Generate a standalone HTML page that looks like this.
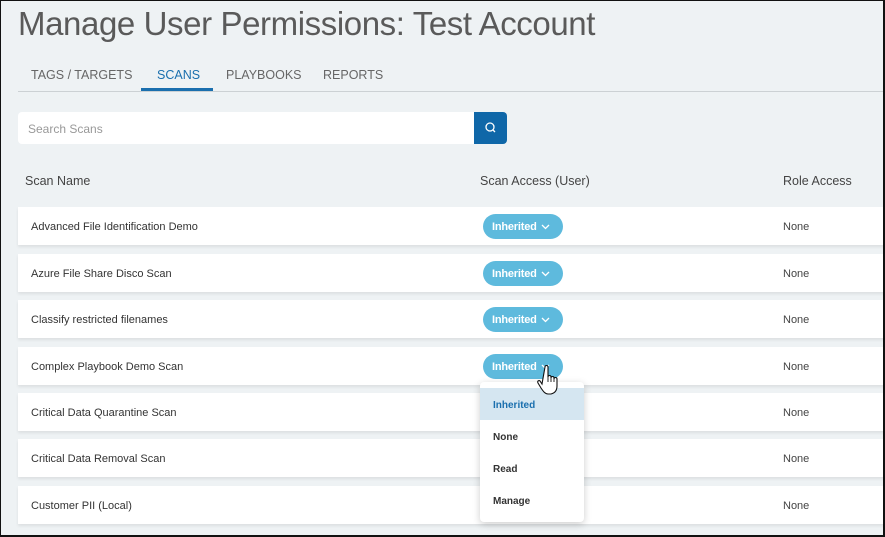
<!DOCTYPE html>
<html><head><style>
*{margin:0;padding:0;box-sizing:border-box}
body{width:885px;height:537px;overflow:hidden;background:#eef2f4;font-family:"Liberation Sans",sans-serif;position:relative}
.a{position:absolute}
h1{position:absolute;left:18px;top:5px;font-weight:300;font-size:33px;color:#5a5a5a;letter-spacing:-0.4px}
.tab{position:absolute;top:68px;font-size:12.5px;color:#666}
.row{position:absolute;left:18px;width:867px;height:38px;background:#fff;box-shadow:0 2px 3px rgba(0,0,0,.08)}
.row .n{position:absolute;left:13px;top:14px;font-size:11px;color:#333}
.row .r{position:absolute;left:765px;top:14px;font-size:11px;color:#444}
.pill{position:absolute;left:465px;top:7px;width:80px;height:25px;border-radius:13px;background:#5ebadd;color:#fff;font-size:11px;font-weight:bold;padding:7px 0 0 9px;letter-spacing:-0.2px}
.pill svg{position:absolute;left:58px;top:10px}
.menu{position:absolute;left:480px;top:382px;width:104px;height:140px;background:#fff;border-radius:4px;box-shadow:0 2px 8px rgba(0,0,0,.2)}
.menu div{height:32px;font-size:10px;font-weight:bold;color:#333;padding:12px 0 0 13px}
.frame{position:absolute;left:0;top:0;width:885px;height:537px;border:1px solid #111;border-width:1px 2px 2px 1px}
</style></head><body>
<h1>Manage User Permissions: Test Account</h1>
<div class="tab" style="left:31px">TAGS / TARGETS</div>
<div class="tab" style="left:157px;color:#1a6fae">SCANS</div>
<div class="tab" style="left:226px">PLAYBOOKS</div>
<div class="tab" style="left:323px">REPORTS</div>
<div class="a" style="left:18px;top:91px;width:867px;height:1px;background:#ccd1d4"></div>
<div class="a" style="left:141px;top:88px;width:72px;height:3px;background:#1a6fae"></div>
<div class="a" style="left:18px;top:112px;width:456px;height:32px;background:#fff;border-radius:4px 0 0 4px"></div>
<div class="a" style="left:28px;top:122px;font-size:12px;color:#999">Search Scans</div>
<div class="a" style="left:474px;top:112px;width:33px;height:32px;background:#0f67a8;border-radius:0 4px 4px 0">
<svg width="33" height="32"><circle cx="16" cy="15" r="4" fill="none" stroke="#fff" stroke-width="1.3"/><line x1="19" y1="18" x2="21" y2="20" stroke="#fff" stroke-width="1.3"/></svg></div>
<div class="a" style="left:25px;top:174px;font-size:12.5px;color:#444">Scan Name</div>
<div class="a" style="left:480px;top:174px;font-size:12.5px;color:#444">Scan Access (User)</div>
<div class="a" style="left:783px;top:174px;font-size:12.5px;color:#444">Role Access</div>

<div class="row" style="top:207px"><span class="n">Advanced File Identification Demo</span><div class="pill">Inherited<svg width="9" height="6"><path d="M1 1L4.5 4.5L8 1" fill="none" stroke="#fff" stroke-width="1.3"/></svg></div><span class="r">None</span></div>
<div class="row" style="top:254px"><span class="n">Azure File Share Disco Scan</span><div class="pill">Inherited<svg width="9" height="6"><path d="M1 1L4.5 4.5L8 1" fill="none" stroke="#fff" stroke-width="1.3"/></svg></div><span class="r">None</span></div>
<div class="row" style="top:300px"><span class="n">Classify restricted filenames</span><div class="pill">Inherited<svg width="9" height="6"><path d="M1 1L4.5 4.5L8 1" fill="none" stroke="#fff" stroke-width="1.3"/></svg></div><span class="r">None</span></div>
<div class="row" style="top:347px"><span class="n">Complex Playbook Demo Scan</span><div class="pill">Inherited<svg width="9" height="6"><path d="M1 1L4.5 4.5L8 1" fill="none" stroke="#fff" stroke-width="1.3"/></svg></div><span class="r">None</span></div>
<div class="row" style="top:393px"><span class="n">Critical Data Quarantine Scan</span><span class="r">None</span></div>
<div class="row" style="top:439px"><span class="n">Critical Data Removal Scan</span><span class="r">None</span></div>
<div class="row" style="top:486px"><span class="n">Customer PII (Local)</span><span class="r">None</span></div>

<div class="menu"><div style="background:#d5e6f1;color:#1a6fae;margin-top:6px">Inherited</div><div>None</div><div>Read</div><div>Manage</div></div>
<svg class="a" style="left:536px;top:364px" width="28" height="34" viewBox="0 0 28 34"><path d="M9 3c0-2 3-2 3 0v10c0-2 3-2 3 0v1c0-2 3-2 3 0v1c0-2 3-2 3 0v7c0 4-2 7-6 8h-3c-3 0-5-3-7-6l-3-5c-1-2 1-3 2-2l2 3z" fill="#fff" stroke="#111" stroke-width="1.1"/><path d="M12 13v5M15 14v4M18 15v3" stroke="#111" stroke-width="0.9"/></svg>
<div class="frame"></div>
</body></html>
